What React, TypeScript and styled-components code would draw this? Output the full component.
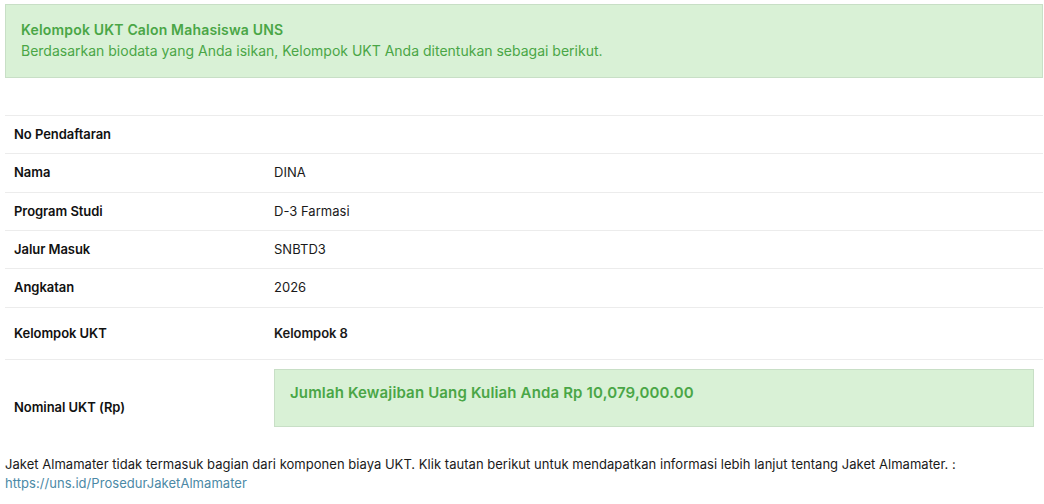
import React from "react";
import styled, { createGlobalStyle } from "styled-components";

const Global = createGlobalStyle`
  html, body { margin: 0; padding: 0; background: #fff; }
  body { font-family: Inter, "Liberation Sans", sans-serif; font-size: 13px; color: #1a1a1a; }
  * { box-sizing: border-box; }
`;
const Page = styled.div`
  width: 1044px; height: 504px; padding: 4px 1px 0 5px; overflow: hidden;
`;
const Alert = styled.div`
  background: #d9f1d6; border: 1px solid #c8dfc6; color: #4aa646;
`;
const TopAlert = styled(Alert)`
  height: 74px; padding: 14px 15px; font-size: 14px; line-height: 21px;
`;
const AlertTitle = styled.div`font-weight: 600; letter-spacing: .18px;`;
const Table = styled.table`
  width: 1038px; border-collapse: collapse; margin-top: 37px; table-layout: fixed;
`;
const Row = styled.tr<{ $h: number }>`
  height: ${p => p.$h}px; border-top: 1px solid #ececec;
`;
const Label = styled.td`
  width: 260px; padding: 0 9px 2px; font-weight: 600; font-size: 13px; letter-spacing: -.05px; color: #111;
`;
const LabelBottom = styled(Label)`vertical-align: bottom; padding-bottom: 22px;`;
const Value = styled.td`padding: 0 9px 2px; font-size: 13px; letter-spacing: .02px;`;
const Strong = styled(Value)`font-weight: 600; letter-spacing: -.05px;`;
const AmountCell = styled(Value)`padding-bottom: 1px;`;
const Amount = styled(Alert)`
  height: 58px; padding: 12px 15px; font-size: 15px; line-height: 21px; font-weight: 600; letter-spacing: .15px;
`;
const Note = styled.p`
  margin: 18px 0 0; font-size: 13px; line-height: 19px; letter-spacing: .03px; color: #1a1a1a;
`;
const Link = styled.a`color: #4b89a6; text-decoration: none; display: block; letter-spacing: .05px;`;

export default function App() {
  const rows: [string, string, number][] = [
    ["No Pendaftaran", "", 38],
    ["Nama", "DINA", 39],
    ["Program Studi", "D-3 Farmasi", 38],
    ["Jalur Masuk", "SNBTD3", 38],
    ["Angkatan", "2026", 39],
  ];
  return (
    <Page>
      <Global />
      <TopAlert>
        <AlertTitle>Kelompok UKT Calon Mahasiswa UNS</AlertTitle>
        <div>Berdasarkan biodata yang Anda isikan, Kelompok UKT Anda ditentukan sebagai berikut.</div>
      </TopAlert>
      <Table>
        <tbody>
          {rows.map(([l, v, h]) => (
            <Row $h={h} key={l}><Label>{l}</Label><Value>{v}</Value></Row>
          ))}
          <Row $h={52}><Label>Kelompok UKT</Label><Strong>Kelompok 8</Strong></Row>
          <Row $h={77}>
            <LabelBottom>Nominal UKT (Rp)</LabelBottom>
            <AmountCell><Amount>Jumlah Kewajiban Uang Kuliah Anda Rp 10,079,000.00</Amount></AmountCell>
          </Row>
        </tbody>
      </Table>
      <Note>
        Jaket Almamater tidak termasuk bagian dari komponen biaya UKT. Klik tautan berikut untuk mendapatkan informasi lebih lanjut tentang Jaket Almamater. :
        <Link href="#">https://uns.id/ProsedurJaketAlmamater</Link>
      </Note>
    </Page>
  );
}
